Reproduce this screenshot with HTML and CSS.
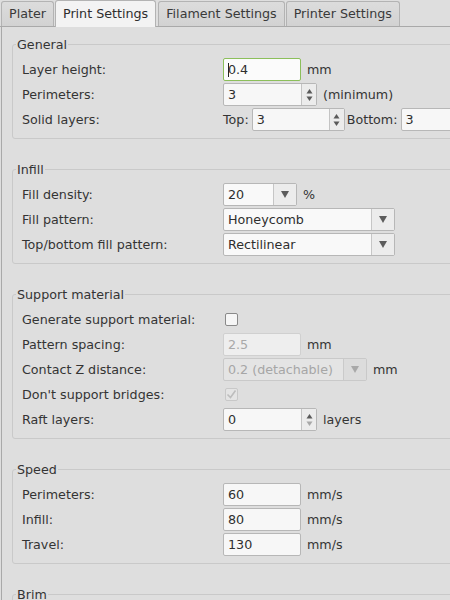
FILE: index.html
```html
<!DOCTYPE html>
<html lang="en">
<head>
    <meta charset="UTF-8">
    <title>Print Settings</title>
    <link rel="stylesheet" href="styles.css">
</head>
<body>
    <div class="tabs">
        <div class="tab">Plater</div>
        <div class="tab active">Print Settings</div>
        <div class="tab">Filament Settings</div>
        <div class="tab">Printer Settings</div>
    </div>

    <div class="page">
        <fieldset class="group">
            <legend>General</legend>
            <div class="rows">
                <div class="row">
                    <span class="label">Layer height:</span>
                    <div class="entry focus w78"><span class="caret"></span>0.4</div>
                    <span class="unit">mm</span>
                </div>
                <div class="row">
                    <span class="label">Perimeters:</span>
                    <div class="entry spin w94">3<span class="spin-btns"><svg width="7" height="14" viewBox="0 0 7 14"><polygon points="3.5,1 6.5,5.5 0.5,5.5"/><polygon points="3.5,13 6.5,8.5 0.5,8.5"/></svg></span></div>
                    <span class="unit">(minimum)</span>
                </div>
                <div class="row">
                    <span class="label">Solid layers:</span>
                    <span class="sub-label">Top:</span>
                    <div class="entry spin w93">3<span class="spin-btns"><svg width="7" height="14" viewBox="0 0 7 14"><polygon points="3.5,1 6.5,5.5 0.5,5.5"/><polygon points="3.5,13 6.5,8.5 0.5,8.5"/></svg></span></div>
                    <span class="sub-label">Bottom:</span>
                    <div class="entry spin w93">3<span class="spin-btns"><svg width="7" height="14" viewBox="0 0 7 14"><polygon points="3.5,1 6.5,5.5 0.5,5.5"/><polygon points="3.5,13 6.5,8.5 0.5,8.5"/></svg></span></div>
                </div>
            </div>
        </fieldset>

        <fieldset class="group">
            <legend>Infill</legend>
            <div class="rows">
                <div class="row">
                    <span class="label">Fill density:</span>
                    <div class="combo w74"><span class="combo-text">20</span><span class="combo-btn"><svg width="8" height="7" viewBox="0 0 8 7"><polygon points="0,0 8,0 4,7"/></svg></span></div>
                    <span class="unit">%</span>
                </div>
                <div class="row">
                    <span class="label">Fill pattern:</span>
                    <div class="combo w172"><span class="combo-text">Honeycomb</span><span class="combo-btn"><svg width="8" height="7" viewBox="0 0 8 7"><polygon points="0,0 8,0 4,7"/></svg></span></div>
                </div>
                <div class="row">
                    <span class="label">Top/bottom fill pattern:</span>
                    <div class="combo w172"><span class="combo-text">Rectilinear</span><span class="combo-btn"><svg width="8" height="7" viewBox="0 0 8 7"><polygon points="0,0 8,0 4,7"/></svg></span></div>
                </div>
            </div>
        </fieldset>

        <fieldset class="group">
            <legend>Support material</legend>
            <div class="rows">
                <div class="row">
                    <span class="label">Generate support material:</span>
                    <span class="check"></span>
                </div>
                <div class="row">
                    <span class="label">Pattern spacing:</span>
                    <div class="entry disabled w78">2.5</div>
                    <span class="unit">mm</span>
                </div>
                <div class="row">
                    <span class="label">Contact Z distance:</span>
                    <div class="combo disabled w144"><span class="combo-text">0.2 (detachable)</span><span class="combo-btn"><svg width="8" height="7" viewBox="0 0 8 7"><polygon points="0,0 8,0 4,7"/></svg></span></div>
                    <span class="unit">mm</span>
                </div>
                <div class="row">
                    <span class="label">Don't support bridges:</span>
                    <span class="check checked disabled"><svg width="11" height="11" viewBox="0 0 11 11"><polyline points="1.5,5.5 4.5,8.5 9.5,1.5"/></svg></span>
                </div>
                <div class="row">
                    <span class="label">Raft layers:</span>
                    <div class="entry spin w94">0<span class="spin-btns"><svg width="7" height="14" viewBox="0 0 7 14"><polygon points="3.5,1 6.5,5.5 0.5,5.5"/><polygon class="dim" points="3.5,13 6.5,8.5 0.5,8.5"/></svg></span></div>
                    <span class="unit">layers</span>
                </div>
            </div>
        </fieldset>

        <fieldset class="group">
            <legend>Speed</legend>
            <div class="rows">
                <div class="row">
                    <span class="label">Perimeters:</span>
                    <div class="entry w78">60</div>
                    <span class="unit">mm/s</span>
                </div>
                <div class="row">
                    <span class="label">Infill:</span>
                    <div class="entry w78">80</div>
                    <span class="unit">mm/s</span>
                </div>
                <div class="row">
                    <span class="label">Travel:</span>
                    <div class="entry w78">130</div>
                    <span class="unit">mm/s</span>
                </div>
            </div>
        </fieldset>

        <fieldset class="group">
            <legend>Brim</legend>
        </fieldset>
    </div>
</body>
</html>
```

FILE: styles.css
```css
body {
    margin: 0;
    height: 600px;
    overflow: hidden;
    background-color: #dedede;
    font-family: "DejaVu Sans", sans-serif;
    font-size: 12.7px;
    color: #343434;
}

/* notebook tabs */
.tabs {
    display: flex;
    align-items: flex-end;
    gap: 1px;
    height: 26px;
    padding-left: 1px;
    border-bottom: 1px solid #a9a9a9;
}
.tab {
    box-sizing: border-box;
    height: 25px;
    padding: 0 7px;
    line-height: 24px;
    border: 1px solid #b3b3b3;
    border-bottom: none;
    border-radius: 3px 3px 0 0;
    background: linear-gradient(#dcdcdc, #d2d2d2);
    color: #3a3a3a;
}
.tab.active {
    height: 27px;
    margin-bottom: -1px;
    margin-right: 1px;
    line-height: 25px;
    background: #f3f3f3;
    color: #2e2e2e;
}

.page {
    margin-left: 1px;
    padding-top: 10px;
    border-left: 1px solid #a9a9a9;
}

/* option groups */
.group {
    width: 480px;
    min-height: 40px;
    margin: 0 0 23px 10px;
    padding: 0;
    border: 1px solid #c9c9c9;
    border-radius: 3px;
}
.group legend {
    margin-left: 3px;
    padding: 0 1px;
    line-height: 15px;
    color: #343434;
}
.rows {
    padding: 5px 0 6px 9px;
}
.row {
    display: flex;
    align-items: center;
    height: 25px;
}
.label {
    width: 201px;
    flex-shrink: 0;
}
.unit {
    margin-left: 6px;
}
.sub-label {
    margin-right: 3px;
}
.sub-label + .entry + .sub-label {
    margin-left: 2px;
}
.row > .sub-label:first-of-type {
    margin-left: -1px;
}

/* text entries */
.entry {
    box-sizing: border-box;
    display: flex;
    align-items: center;
    height: 23px;
    padding-left: 4px;
    border: 1px solid #b7b7b7;
    border-radius: 2px;
    background-color: #f7f7f7;
    color: #2e2e2e;
}
.entry.focus {
    border-color: #8cbf5b;
    background-color: #fbfbfb;
}
.entry.disabled {
    border-color: #d0d0d0;
    background-color: #eeeeee;
    color: #a9a9a9;
}
.caret {
    width: 1px;
    height: 14px;
    margin-right: -1px;
    background-color: #222;
}
.w78 { width: 78px; }
.w93 { width: 93px; }
.w94 { width: 94px; }
.w74 { width: 74px; }
.w144 { width: 144px; }
.w172 { width: 172px; }

.spin-btns {
    display: flex;
    align-items: center;
    justify-content: center;
    width: 14px;
    height: 100%;
    margin-left: auto;
    border-left: 1px solid #c4c4c4;
    background-color: #ececec;
}
.spin-btns svg {
    fill: #5a5a5a;
}
.spin-btns .dim {
    fill: #a8a8a8;
}

/* drop-down lists */
.combo {
    box-sizing: border-box;
    display: flex;
    height: 23px;
    border: 1px solid #b7b7b7;
    border-radius: 2px;
    background-color: #f9f9f9;
    color: #2e2e2e;
}
.combo-text {
    flex: 1;
    display: flex;
    align-items: center;
    padding-left: 4px;
    white-space: nowrap;
}
.combo-btn {
    display: flex;
    align-items: center;
    justify-content: center;
    width: 22px;
    border-left: 1px solid #c6c6c6;
    background-color: #ececec;
}
.combo-btn svg {
    fill: #5c5c5c;
}
.combo.disabled {
    border-color: #c9c9c9;
    background-color: #e4e4e4;
    color: #a6a6a6;
}
.combo.disabled .combo-btn {
    border-left-color: #cacaca;
    background-color: #dcdcdc;
}
.combo.disabled .combo-btn svg {
    fill: #a9a9a9;
}

/* check boxes */
.check {
    box-sizing: border-box;
    display: flex;
    align-items: center;
    justify-content: center;
    width: 13px;
    height: 13px;
    margin-left: 2px;
    border: 1px solid #8a8a8a;
    border-radius: 2px;
    background-color: #f6f6f6;
}
.check.disabled {
    border-color: #c8c8c8;
    background-color: #e4e4e4;
}
.check svg {
    fill: none;
    stroke: #bdbdbd;
    stroke-width: 1.6;
}
```
